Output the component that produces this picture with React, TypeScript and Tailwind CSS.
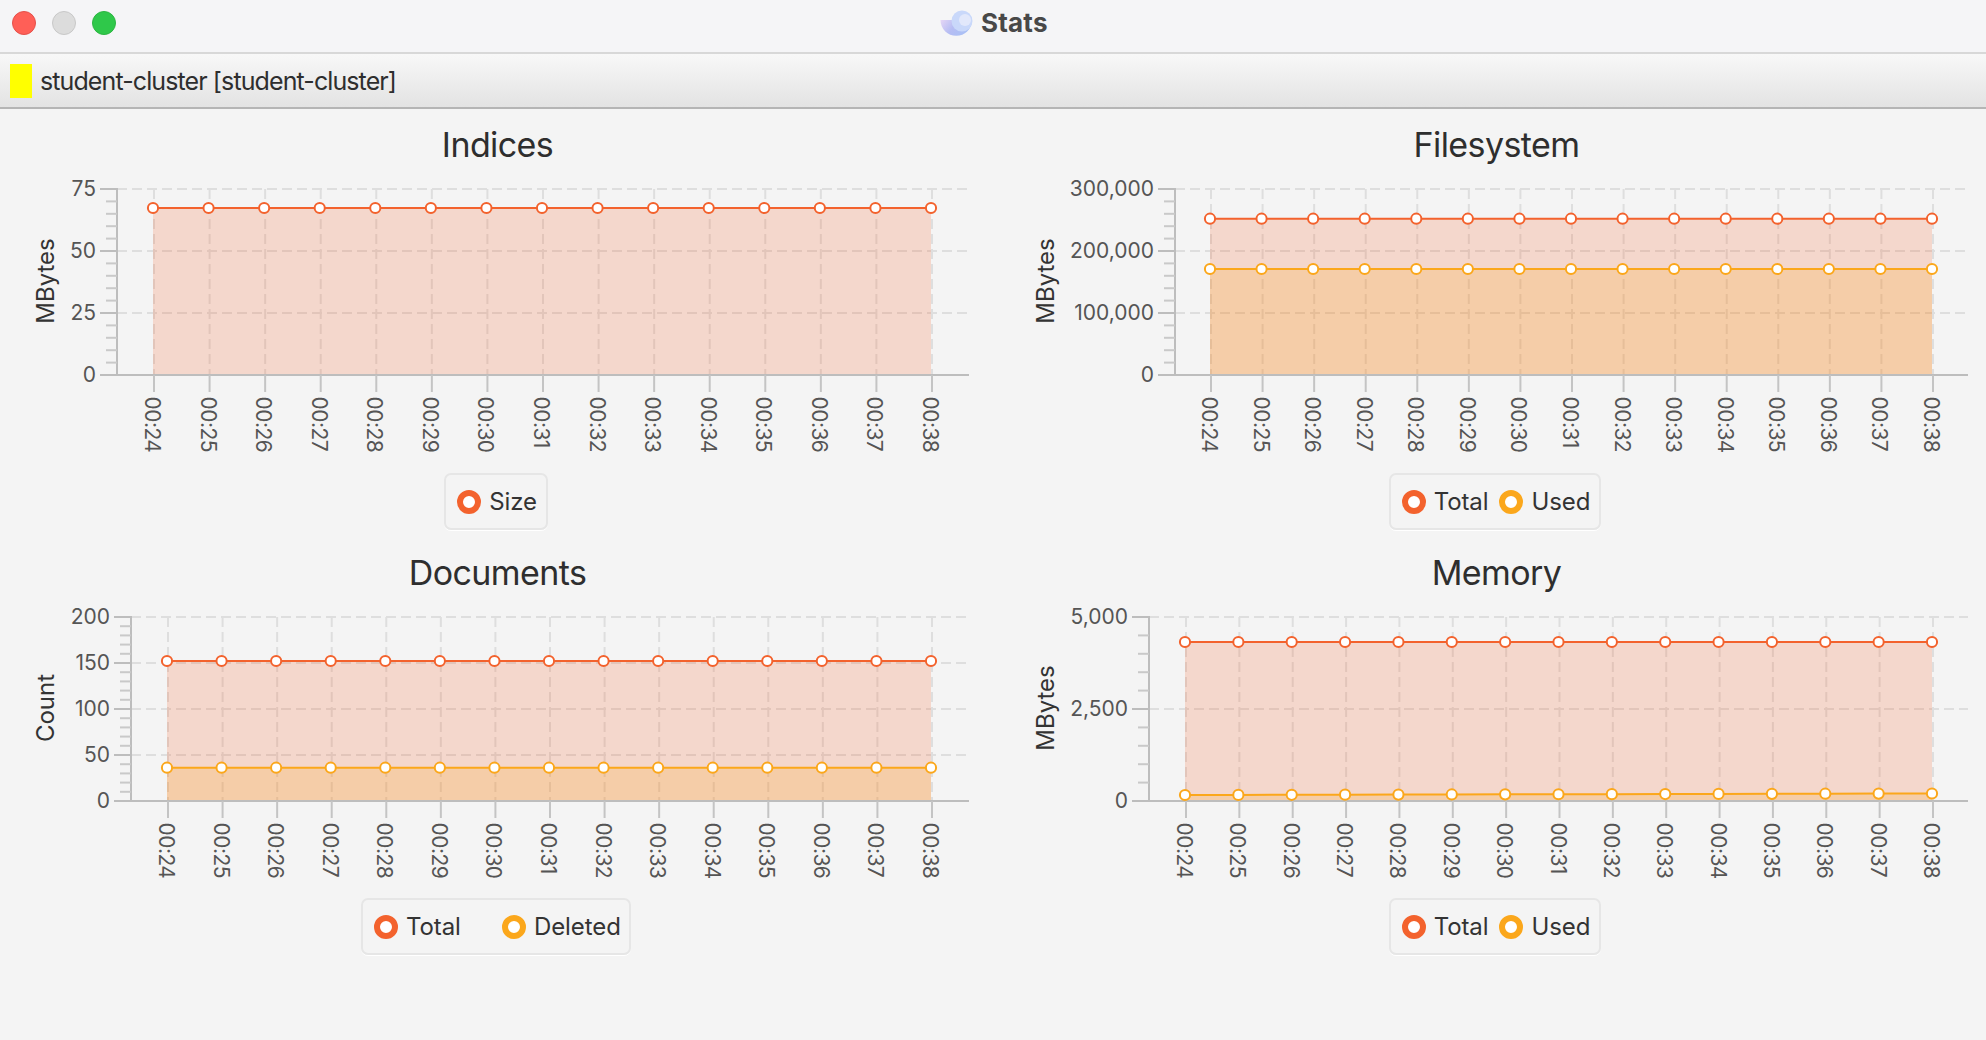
import React from "react";

const ORANGE = "#f3622d";
const AMBER = "#fba71b";
const LABELS = ["00:24","00:25","00:26","00:27","00:28","00:29","00:30","00:31","00:32","00:33","00:34","00:35","00:36","00:37","00:38"];

type Series = { name: string; color: string; fill: string; ys: number[] };
type ChartProps = {
  title: string;
  yTitle: string;
  panelX: number;
  top: number;
  svgH: number;
  axisX: number;
  plotTop: number;
  plotBottom: number;
  endX: number;
  firstX: number;
  lastX: number;
  ticks: string[];
  series: Series[];
  itemClass: string;
  legendClass: string;
};

const flat = (y: number) => LABELS.map(() => y);

function Chart(p: ChartProps) {
  const w = 979;
  const n = p.ticks.length - 1;
  const majorH = (p.plotBottom - p.plotTop) / n;
  const xs = LABELS.map((_, i) => p.firstX + ((p.lastX - p.firstX) * i) / 14);
  const majors = p.ticks.map((_, i) => p.plotTop + majorH * i);
  const minors: number[] = [];
  for (let i = 0; i < n; i++) for (let j = 1; j < 5; j++) minors.push(majors[i] + (majorH * j) / 5);
  const yMid = (p.plotTop + p.plotBottom) / 2 - 1;
  const titleX = p.panelX > 100 ? 1045 + 8.5 : 53.5;
  return (
    <div className="flex flex-col items-center">
      <div className="h-[40px] flex items-center justify-center text-[34px] text-[#2e2e2e] tracking-[-0.6px] leading-none">{p.title}</div>
      <svg width={w} height={p.svgH} viewBox={`${p.panelX} ${p.top} ${w} ${p.svgH}`} className="block">
        {majors.slice(0, -1).map((y, i) => (
          <line key={i} x1={p.axisX} x2={p.endX} y1={y} y2={y} stroke="#dedede" strokeWidth={2} strokeDasharray="10 5" />
        ))}
        {xs.map((x, i) => (
          <line key={i} x1={x + 1} x2={x + 1} y1={p.plotTop} y2={p.plotBottom} stroke="#dedede" strokeWidth={2} strokeDasharray="10 5" />
        ))}
        {p.series.map((s) => (
          <path
            key={s.name + "f"}
            d={`M${xs[0]} ${p.plotBottom} ` + xs.map((x, i) => `L${x} ${s.ys[i]}`).join(" ") + ` L${xs[14]} ${p.plotBottom} Z`}
            fill={s.fill}
          />
        ))}
        <line x1={p.axisX} x2={p.axisX} y1={p.plotTop - 1} y2={p.plotBottom} stroke="#bdbdbd" strokeWidth={2} />
        <line x1={p.axisX - 17} x2={p.endX} y1={p.plotBottom} y2={p.plotBottom} stroke="#bdbdbd" strokeWidth={2} />
        {majors.map((y, i) => (
          <line key={i} x1={p.axisX - 17} x2={p.axisX} y1={y} y2={y} stroke="#bdbdbd" strokeWidth={2} />
        ))}
        {minors.map((y, i) => (
          <line key={i} x1={p.axisX - 11} x2={p.axisX} y1={y} y2={y} stroke="#c9c9c9" strokeWidth={2} />
        ))}
        {xs.map((x, i) => (
          <line key={i} x1={x + 1} x2={x + 1} y1={p.plotBottom} y2={p.plotBottom + 17} stroke="#c4c4c4" strokeWidth={2} />
        ))}
        {p.ticks.map((t, i) => (
          <text key={t} x={p.axisX - 21} y={majors[i] + 6.5} textAnchor="end" fontSize={21} fill="#555555">{t}</text>
        ))}
        {xs.map((x, i) => (
          <text key={i} transform={`translate(${x - 8},${p.plotBottom + 21.5}) rotate(90)`} fontSize={21} letterSpacing={-0.55} fill="#555555">{LABELS[i]}</text>
        ))}
        <text transform={`translate(${titleX},${yMid}) rotate(-90)`} textAnchor="middle" fontSize={24} fill="#333333">{p.yTitle}</text>
        {p.series.map((s) => (
          <g key={s.name}>
            <polyline points={xs.map((x, i) => `${x},${s.ys[i]}`).join(" ")} fill="none" stroke={s.color} strokeWidth={2} />
            {xs.map((x, i) => (
              <circle key={i} cx={x} cy={s.ys[i]} r={5.1} fill="#ffffff" stroke={s.color} strokeWidth={2} />
            ))}
          </g>
        ))}
      </svg>
      <div className={`h-[57px] mr-[3px] flex items-center pl-[11px] border-2 border-[#e6e6e6] rounded-[7px] shadow-[0_1px_0_#ffffff] ${p.legendClass}`}>
        {p.series.map((s) => (
          <div key={s.name} className={`flex items-center gap-[8px] ${p.itemClass}`}>
            <span className="shrink-0 w-[24px] h-[24px] rounded-full bg-white border-[6px]" style={{ borderColor: s.color }} />
            <span className="text-[24px] text-[#333333] tracking-[-0.1px] leading-none">{s.name}</span>
          </div>
        ))}
      </div>
    </div>
  );
}

const f1 = "rgba(243,98,45,0.2)";
const f2 = "rgba(251,167,27,0.2)";

export default function App() {
  return (
    <div className="w-[1986px] h-[1040px] bg-[#f4f4f4] overflow-hidden flex flex-col font-['Inter',sans-serif]">
      <div className="h-[54px] shrink-0 bg-[#f5f5f7] border-b-2 border-[#d8d8d8] relative flex items-center">
        <div className="flex items-center gap-[16px] pl-[12px] pb-[6px]">
          <span className="w-[24px] h-[24px] rounded-full bg-[#ff5f57] border border-[#e5504a]" />
          <span className="w-[24px] h-[24px] rounded-full bg-[#dcdcdc] border border-[#c8c8c8]" />
          <span className="w-[24px] h-[24px] rounded-full bg-[#2fc84a] border border-[#2cb542]" />
        </div>
        <div className="absolute left-[940px] top-[9px] flex items-center gap-[8px] h-[28px]">
          <svg width="33" height="26" viewBox="0 0 33 26">
            <defs>
              <linearGradient id="bowl" x1="0" x2="1" y1="0" y2="0.4">
                <stop offset="0" stopColor="#e6d6f5" />
                <stop offset="0.5" stopColor="#b6bdf3" />
                <stop offset="1" stopColor="#a9c0f5" />
              </linearGradient>
            </defs>
            <path d="M0.5 10 H32 A15.5 15.5 0 0 1 0.5 10 Z" fill="url(#bowl)" />
            <circle cx="22" cy="11" r="10.5" fill="#c9d8fa" />
            <circle cx="25" cy="10" r="6" fill="#e2e8fb" />
          </svg>
          <span className="text-[26px] font-bold text-[#484848] leading-none tracking-[0.2px]">Stats</span>
        </div>
      </div>
      <div className="h-[55px] shrink-0 bg-gradient-to-b from-[#f8f8f8] to-[#e3e3e3] border-b-2 border-[#b5b5b5] flex items-center pl-[10px] gap-[8px]">
        <span className="w-[22px] h-[34px] bg-[#ffff00]" />
        <span className="text-[25px] text-[#2e2e2e] tracking-[-0.9px] leading-none pt-[1px]">student-cluster [student-cluster]</span>
      </div>
      <div className="grid grid-cols-2 gap-x-[20px] gap-y-[23px] pl-[8px] pt-[16px]">
        <Chart
          title="Indices" yTitle="MBytes" panelX={8} top={165} svgH={308}
          axisX={117} plotTop={189} plotBottom={375} endX={969} firstX={153} lastX={931}
          ticks={["75","50","25","0"]} itemClass="" legendClass="gap-[11px] pr-[9px]"
          series={[{ name: "Size", color: ORANGE, fill: f1, ys: flat(208) }]}
        />
        <Chart
          title="Filesystem" yTitle="MBytes" panelX={1007} top={165} svgH={308}
          axisX={1175} plotTop={189} plotBottom={375} endX={1968} firstX={1210} lastX={1932}
          ticks={["300,000","200,000","100,000","0"]} itemClass="" legendClass="gap-[11px] pr-[9px]"
          series={[
            { name: "Total", color: ORANGE, fill: f1, ys: flat(218.7) },
            { name: "Used", color: AMBER, fill: f2, ys: flat(269) },
          ]}
        />
        <Chart
          title="Documents" yTitle="Count" panelX={8} top={593} svgH={305}
          axisX={131} plotTop={617} plotBottom={801} endX={969} firstX={167} lastX={931}
          ticks={["200","150","100","50","0"]} itemClass="w-[118px]" legendClass="gap-[10px] pr-[9px]"
          series={[
            { name: "Total", color: ORANGE, fill: f1, ys: flat(661) },
            { name: "Deleted", color: AMBER, fill: f2, ys: flat(767.7) },
          ]}
        />
        <Chart
          title="Memory" yTitle="MBytes" panelX={1007} top={593} svgH={305}
          axisX={1149} plotTop={617} plotBottom={801} endX={1968} firstX={1185} lastX={1932}
          ticks={["5,000","2,500","0"]} itemClass="" legendClass="gap-[11px] pr-[9px]"
          series={[
            { name: "Total", color: ORANGE, fill: f1, ys: flat(642) },
            { name: "Used", color: AMBER, fill: f2, ys: LABELS.map((_, i) => 795 - (i * 1.5) / 14) },
          ]}
        />
      </div>
    </div>
  );
}
